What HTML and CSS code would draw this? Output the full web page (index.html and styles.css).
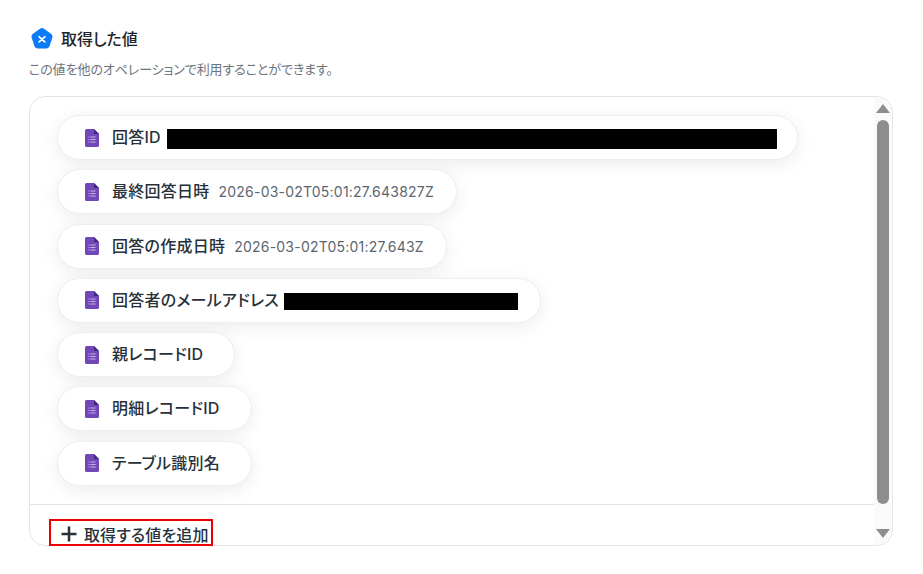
FILE: index.html
```html
<!DOCTYPE html>
<html lang="ja">
<head>
    <meta charset="UTF-8">
    <meta name="viewport" content="width=device-width, initial-scale=1.0">
    <title>取得した値</title>
    <link rel="stylesheet" href="styles.css">
</head>
<body>
    <div class="heading">
        <svg class="heading-icon" width="24" height="24" viewBox="0 0 24 24">
            <path d="M10.300 1.600a3 3 0 0 1 3.400 0l7.600 5.500a3 3 0 0 1 1.100 3.300l-2.900 8.900a3 3 0 0 1-2.800 2.100H7.300a3 3 0 0 1-2.800-2.100L1.600 10.400a3 3 0 0 1 1.100-3.300z" fill="#0b7cf6"/>
            <path d="M9.200 9.800l5.600 5M14.800 9.800l-5.600 5" stroke="#fff" stroke-width="1.800" stroke-linecap="round"/>
        </svg>
        <h2>取得した値</h2>
    </div>
    <p class="note">この値を他のオペレーションで利用することができます。</p>

    <div class="panel">
        <div class="panel-main">
            <div class="pills">
                <div class="pill">
                    <svg class="form-icon" width="14" height="18" viewBox="0 0 14 18"><use href="#form"/></svg>
                    <span class="name">回答ID</span>
                    <span class="mask mask-id"></span>
                </div>
                <div class="pill">
                    <svg class="form-icon" width="14" height="18" viewBox="0 0 14 18"><use href="#form"/></svg>
                    <span class="name">最終回答日時</span>
                    <span class="value">2026-03-02T05:01:27.643827Z</span>
                </div>
                <div class="pill">
                    <svg class="form-icon" width="14" height="18" viewBox="0 0 14 18"><use href="#form"/></svg>
                    <span class="name">回答の作成日時</span>
                    <span class="value">2026-03-02T05:01:27.643Z</span>
                </div>
                <div class="pill">
                    <svg class="form-icon" width="14" height="18" viewBox="0 0 14 18"><use href="#form"/></svg>
                    <span class="name">回答者のメールアドレス</span>
                    <span class="mask mask-mail"></span>
                </div>
                <div class="pill">
                    <svg class="form-icon" width="14" height="18" viewBox="0 0 14 18"><use href="#form"/></svg>
                    <span class="name">親レコードID</span>
                    <span class="value"></span>
                </div>
                <div class="pill">
                    <svg class="form-icon" width="14" height="18" viewBox="0 0 14 18"><use href="#form"/></svg>
                    <span class="name">明細レコードID</span>
                    <span class="value"></span>
                </div>
                <div class="pill">
                    <svg class="form-icon" width="14" height="18" viewBox="0 0 14 18"><use href="#form"/></svg>
                    <span class="name">テーブル識別名</span>
                    <span class="value"></span>
                </div>
            </div>
            <div class="panel-foot">
                <button class="add-btn">
                    <svg width="16" height="16" viewBox="0 0 16 16"><path d="M8 0.500v15M0.500 8h15" stroke="#27313a" stroke-width="2.500"/></svg>
                    取得する値を追加
                </button>
            </div>
        </div>
        <div class="scrollbar">
            <span class="arrow-up"></span>
            <span class="thumb"></span>
            <span class="arrow-down"></span>
        </div>
    </div>

    <svg width="0" height="0" class="defs">
        <symbol id="form" viewBox="0 0 14 18">
            <path d="M1.500 0H9l5 5v11.500a1.500 1.500 0 0 1-1.500 1.500h-11A1.500 1.500 0 0 1 0 16.500v-15A1.500 1.500 0 0 1 1.500 0z" fill="#7248b9"/>
            <path d="M9 0l5 5H9z" fill="#3f2a80"/>
            <path d="M5.500 8h5M5.500 10.500h5M5.500 13h5M3.500 8h1M3.500 10.500h1M3.500 13h1" stroke="#c9b6e6" stroke-width="1.200"/>
        </symbol>
    </svg>
</body>
</html>
```

FILE: styles.css
```css
body {
    margin: 0;
    padding: 27px 30px 0 29px;
    font-family: Inter, "Noto Sans CJK JP", sans-serif;
    font-feature-settings: "palt";
    color: #27313a;
    background: #fff;
}

.heading {
    display: flex;
    align-items: center;
    gap: 7px;
    padding-left: 1px;
    height: 24px;
}

.heading h2 {
    margin: -3px 0 0;
    font-size: 16px;
    font-weight: 500;
    color: #1f2429;
}

.note {
    margin: 9px 0 0;
    height: 18px;
    line-height: 18px;
    font-size: 13px;
    letter-spacing: -0.080px;
    color: #6c757d;
}

.panel {
    display: flex;
    margin-top: 18px;
    height: 448px;
    border: 1px solid #e3e5e8;
    border-radius: 16px;
}

.panel-main {
    flex: 1;
    display: flex;
    flex-direction: column;
    min-width: 0;
}

.pills {
    flex: 1;
    display: flex;
    flex-direction: column;
    align-items: flex-start;
    gap: 9.300px;
    padding: 18px 0 0 27px;
    border-bottom: 1px solid #e3e5e8;
}

.pill {
    display: flex;
    align-items: center;
    height: 45px;
    padding: 0 22px 0 27px;
    background: #fff;
    border: 1px solid #eceef0;
    border-radius: 23px;
    box-shadow: 0 4px 18px rgba(0, 0, 0, 0.08);
    box-sizing: border-box;
}

.form-icon {
    flex: none;
    margin-right: 13px;
}

.name {
    font-size: 16px;
    line-height: 20px;
    letter-spacing: 0.250px;
    margin-top: -1px;
    font-weight: 500;
    white-space: nowrap;
}

.value {
    margin-left: 9px;
    font-size: 14px;
    letter-spacing: 0.220px;
    color: #5c6670;
    white-space: nowrap;
}

.mask {
    display: block;
    background: #000;
    height: 20px;
    margin: 2px 0 0 6px;
}

.mask-id {
    width: 610px;
    margin-right: -2px;
}

.mask-mail {
    width: 234px;
    height: 17px;
    margin-left: 5px;
}

.panel-foot {
    height: 40px;
    flex: none;
    padding: 14px 0 0 19px;
    box-sizing: border-box;
}

.add-btn {
    display: flex;
    align-items: center;
    gap: 7px;
    width: 164px;
    height: 27px;
    padding: 3px 0 0 10px;
    border: 2px solid #ee0000;
    background: #fff;
    font-family: inherit;
    font-feature-settings: inherit;
    font-size: 16px;
    letter-spacing: 0.120px;
    font-weight: 500;
    color: #27313a;
    white-space: nowrap;
    box-sizing: border-box;
}

.scrollbar {
    flex: none;
    width: 17px;
    margin-right: 1px;
    display: flex;
    flex-direction: column;
    align-items: center;
    background: #fafafa;
    border-radius: 0 15px 15px 0;
    padding-top: 7px;
    box-sizing: border-box;
}

.thumb {
    width: 12px;
    height: 384px;
    margin-top: 7px;
    background: #8e8e8e;
    border-radius: 6px;
}

.arrow-up,
.arrow-down {
    width: 0;
    height: 0;
    border-left: 7px solid transparent;
    border-right: 7px solid transparent;
}

.arrow-up {
    border-bottom: 9px solid #8e8e8e;
}

.arrow-down {
    margin-top: 25px;
    border-top: 9px solid #8e8e8e;
}

.defs {
    display: block;
    height: 0;
}
```
